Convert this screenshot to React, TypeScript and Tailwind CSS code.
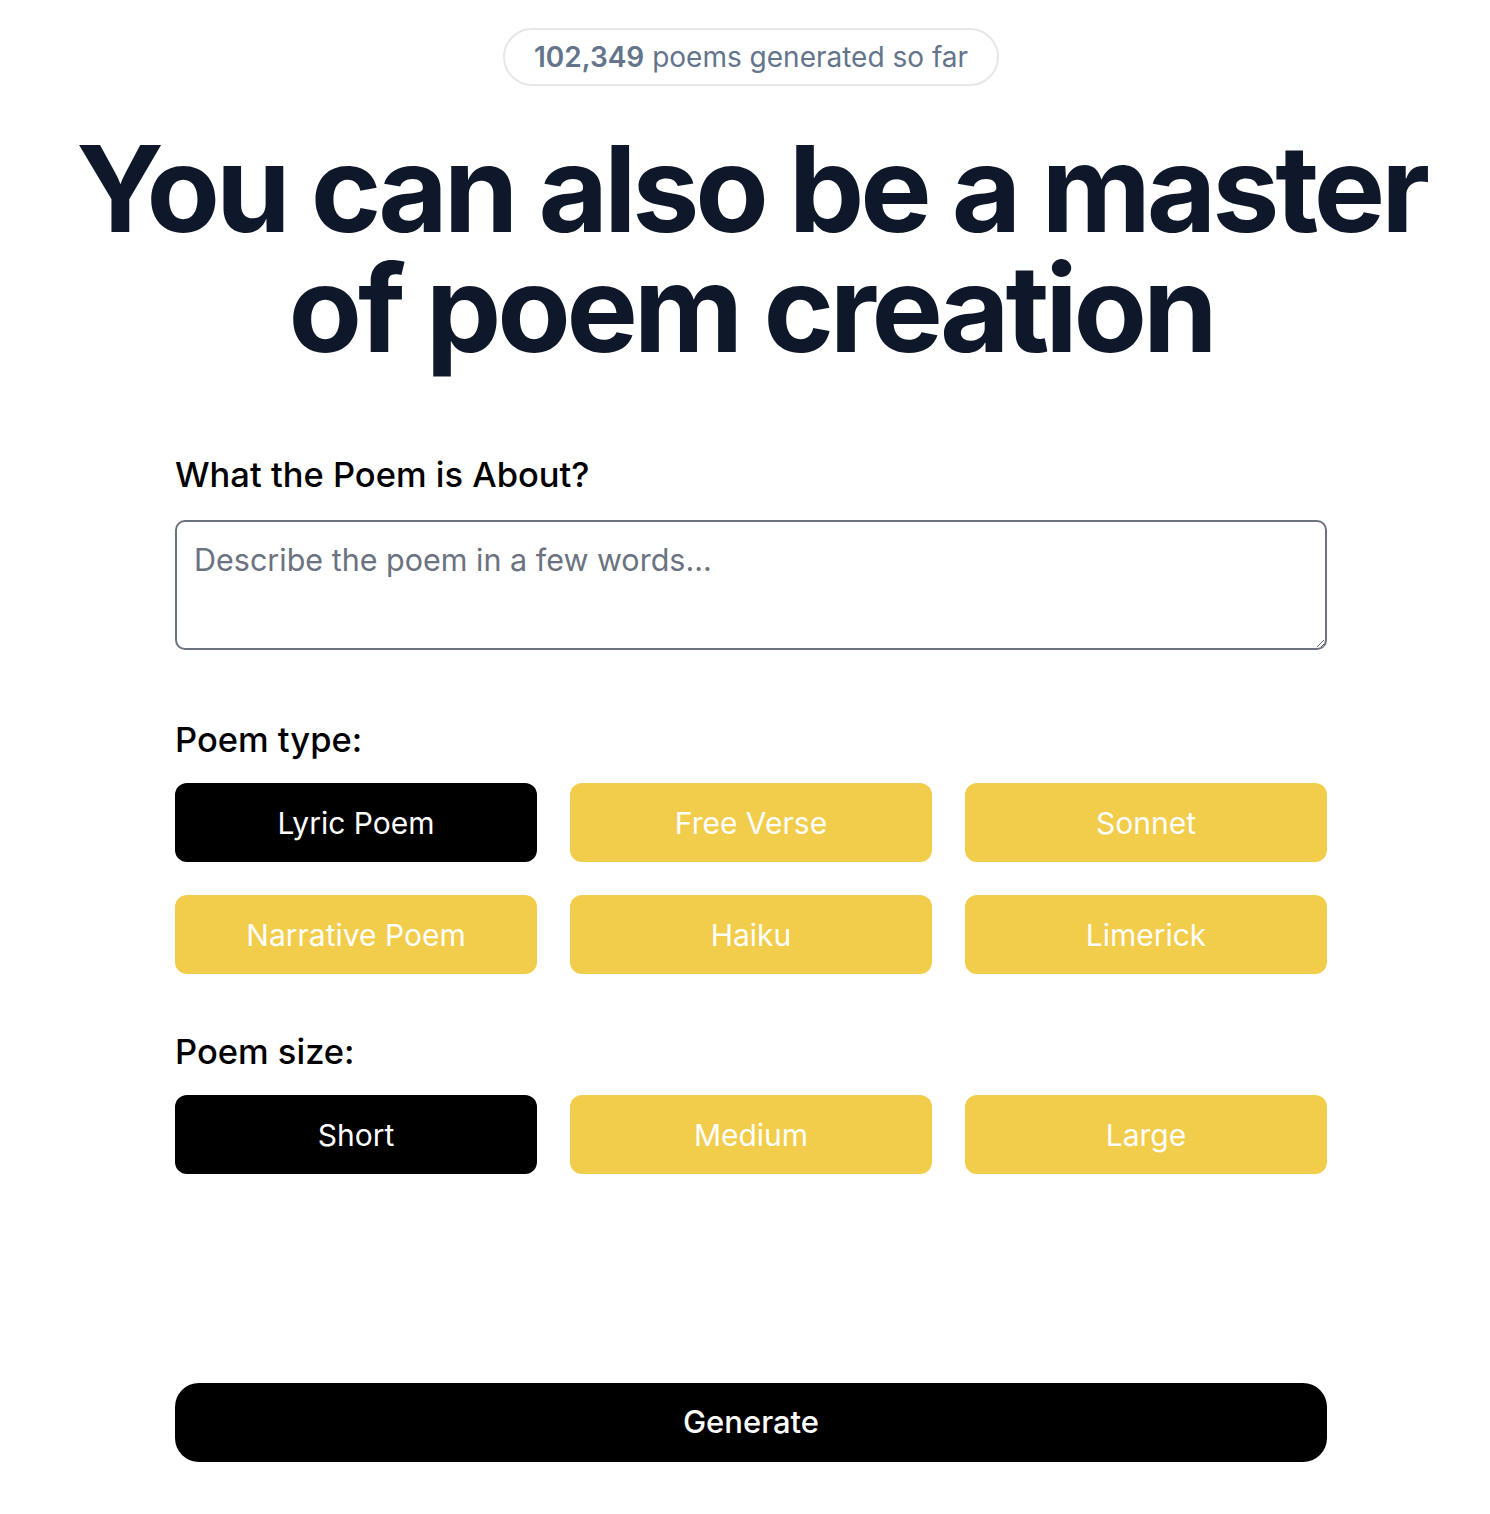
import { useState } from 'react';

const poemTypes = ['Lyric Poem', 'Free Verse', 'Sonnet', 'Narrative Poem', 'Haiku', 'Limerick'];
const poemSizes = ['Short', 'Medium', 'Large'];

function OptionGrid({
  options,
  value,
  onChange,
}: {
  options: string[];
  value: string;
  onChange: (v: string) => void;
}) {
  return (
    <div className="grid grid-cols-3 gap-x-[33px] gap-y-[33px]">
      {options.map((opt) => (
        <button
          key={opt}
          type="button"
          onClick={() => onChange(opt)}
          className={`h-[79px] rounded-[12px] text-[30px] leading-none ${
            value === opt ? 'bg-black text-white' : 'bg-[#f2cc4b] text-white'
          }`}
        >
          {opt}
        </button>
      ))}
    </div>
  );
}

export default function App() {
  const [type, setType] = useState('Lyric Poem');
  const [size, setSize] = useState('Short');

  return (
    <div className="flex min-h-[1514px] flex-col items-center bg-white pl-[12px] font-['Inter',sans-serif]">
      <div className="mt-[28px] flex h-[58px] w-[496px] items-center justify-center rounded-full border-2 border-[#e5e7eb] text-[28px] text-[#64748b]">
        <span>
          <span className="font-semibold">102,349</span> poems generated so far
        </span>
      </div>

      <h1 className="mt-[43px] text-center text-[120px] font-bold leading-[120px] tracking-[-0.035em] text-[#0f172a]">
        You can also be a master
        <br />
        of poem creation
      </h1>

      <form className="mt-[86px] flex w-[1152px] flex-col" onSubmit={(e) => e.preventDefault()}>
        <label className="text-[34.5px] font-medium leading-[40px] text-black">What the Poem is About?</label>
        <textarea
          rows={3}
          placeholder="Describe the poem in a few words..."
          className="mt-[25px] h-[130px] w-full rounded-[10px] border-2 border-[#6b7280] px-[17px] py-[18px] text-[30.5px] leading-[40px] text-black placeholder:text-[#6b7280] outline-none"
        />

        <label className="mt-[70px] text-[34.5px] font-medium leading-[40px] text-black">Poem type:</label>
        <div className="mt-[23px]">
          <OptionGrid options={poemTypes} value={type} onChange={setType} />
        </div>

        <label className="mt-[58px] text-[34.5px] font-medium leading-[40px] text-black">Poem size:</label>
        <div className="mt-[23px]">
          <OptionGrid options={poemSizes} value={size} onChange={setSize} />
        </div>

        <button
          type="submit"
          className="mt-[209px] h-[79px] w-full rounded-[24px] bg-black text-[31px] font-medium text-white"
        >
          Generate
        </button>
      </form>
    </div>
  );
}
